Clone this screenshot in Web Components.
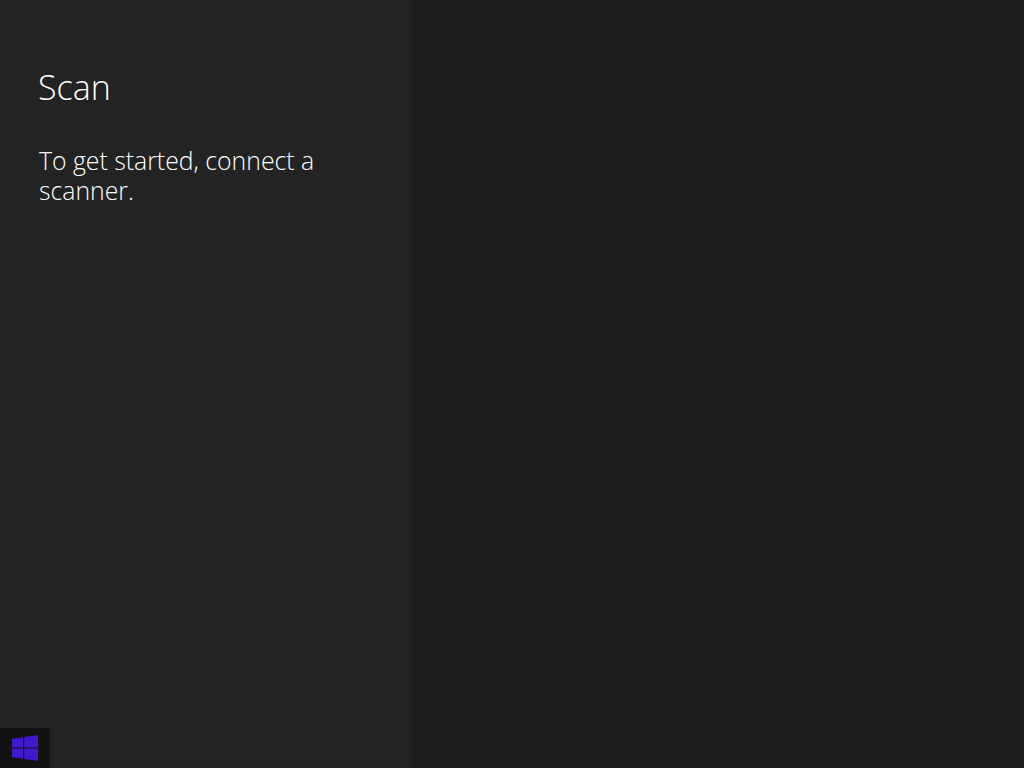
<!DOCTYPE html>
<html>
<head>
<meta charset="utf-8">
<title>Scan</title>
<style>
  html, body {
    margin: 0;
    height: 100%;
    background: #1d1d1d;
    overflow: hidden;
  }
</style>
</head>
<body>
<scan-app>
  <scan-pane>
    <span slot="title">Scan</span>
    To get started, connect a scanner.
  </scan-pane>
</scan-app>

<script>
const appTemplate = document.createElement('template')
appTemplate.innerHTML = `
<style>
  :host {
    display: grid;
    grid-template-columns: 412px 1fr;
    width: 1024px;
    height: 768px;
    position: relative;
    font-family: "Open Sans", "Liberation Sans", sans-serif;
    color: #fff;
  }
  .main {
    background: #1d1d1d;
  }
</style>
<slot></slot>
<div class="main"></div>
<start-button></start-button>
`

customElements.define('scan-app',
  class extends HTMLElement {
    constructor() {
      super()
      this.attachShadow({ mode: 'open' }).appendChild(appTemplate.content.cloneNode(true))
    }
  }
)

const paneTemplate = document.createElement('template')
paneTemplate.innerHTML = `
<style>
  :host {
    display: block;
    background: #232323;
    padding: 66px 90px 0 39px;
  }
  h1 {
    margin: 0;
    font-size: 34px;
    line-height: 42px;
    font-weight: 300;
    margin-left: -1px;
  }
  p {
    margin: 37px 0 0;
    font-size: 24.8px;
    line-height: 30px;
    font-weight: 300;
  }
</style>
<h1><slot name="title"></slot></h1>
<p><slot></slot></p>
`

customElements.define('scan-pane',
  class extends HTMLElement {
    constructor() {
      super()
      this.attachShadow({ mode: 'open' }).appendChild(paneTemplate.content.cloneNode(true))
    }
  }
)

const startTemplate = document.createElement('template')
startTemplate.innerHTML = `
<style>
  :host {
    position: absolute;
    left: 0;
    bottom: 0;
    width: 50px;
    height: 40px;
    background: #131313;
    display: flex;
    align-items: center;
    justify-content: center;
  }
  svg {
    display: block;
    width: 26px;
    height: 26px;
  }
</style>
<svg viewBox="0 0 26 26">
  <path fill="#4119cc" d="M0 3.8 11.2 2.2V12.5H0ZM12.2 2 26 0V12.5H12.2ZM0 13.5H11.2V23.8L0 22.2ZM12.2 13.5H26V26L12.2 24Z"/>
</svg>
`

customElements.define('start-button',
  class extends HTMLElement {
    constructor() {
      super()
      this.attachShadow({ mode: 'open' }).appendChild(startTemplate.content.cloneNode(true))
    }
  }
)
</script>
</body>
</html>
